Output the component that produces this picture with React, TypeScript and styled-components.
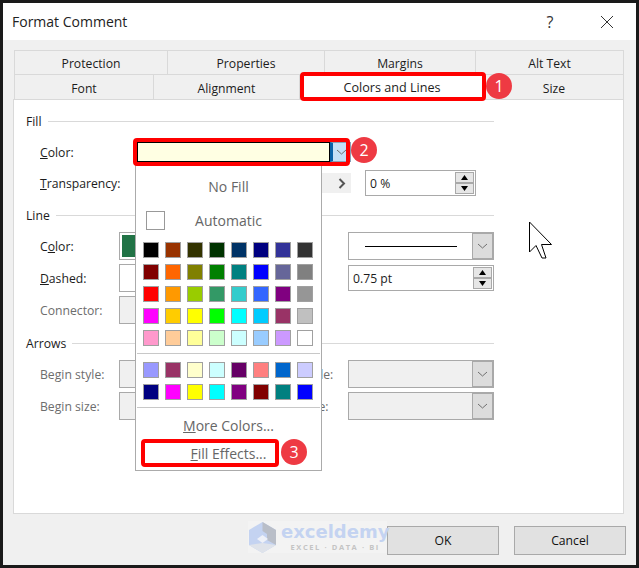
import * as React from "react";
import styled, {createGlobalStyle} from "styled-components";

const GlobalStyle = createGlobalStyle`
  html, body {
    margin: 0;
    padding: 0;
    background: #000;
  }
  body {
    font-family: "Open Sans", "Noto Sans", sans-serif;
    font-size: 12.2px;
    color: #1c1c1c;
  }
`;

const Dialog = styled.div`
  position: relative;
  box-sizing: border-box;
  width: 639px;
  height: 568px;
  border: 3px solid #1a1a1a;
  background: #f0f0f0;
  overflow: hidden;
`;

const TitleBar = styled.header`
  display: flex;
  align-items: center;
  height: 37px;
  padding: 0 22px 0 9px;
  background: #fff;
`;

const Title = styled.h1`
  flex: 1;
  margin: 0;
  font-size: 14px;
  font-weight: 400;
  color: #222;
`;

const TitleButton = styled.span`
  display: flex;
  justify-content: center;
  align-items: center;
  width: 14px;
  margin-left: 43px;
  font-size: 16px;
  color: #333;
`;

const Body = styled.div`
  padding: 10px 0 0 10px;
`;

const TabRow = styled.div`
  display: flex;
  margin-left: 1px;
`;

const Tab = styled.div<{$w: number; $h: number; $active?: boolean}>`
  box-sizing: border-box;
  display: flex;
  justify-content: center;
  align-items: center;
  width: ${p => p.$w}px;
  height: ${p => p.$h}px;
  padding-top: ${p => (p.$active ? 0 : 2)}px;
  border-top: 1px solid #d9d9d9;
  border-right: 1px solid #d9d9d9;
  background: ${p => (p.$active ? "#fff" : "#f0f0f0")};
  font-size: ${p => (p.$active ? 12.6 : 12.2)}px;
`;

const FirstTabBorder = styled.div`
  border-left: 1px solid #d9d9d9;
  display: flex;
`;

const Panel = styled.main`
  box-sizing: border-box;
  width: 611px;
  height: 415px;
  padding: 13px 0 0 12px;
  border: 1px solid #d9d9d9;
  background: #fff;
`;

const Form = styled.div`
  width: 468px;
`;

const Heading = styled.div<{$top?: number}>`
  display: flex;
  align-items: center;
  gap: 6px;
  height: 16px;
  margin-top: ${p => p.$top ?? 0}px;
  &::after {
    content: "";
    flex: 1;
    height: 1px;
    background: #d9d9d9;
  }
`;

const FillRow = styled.div<{$top: number; $h: number}>`
  display: flex;
  align-items: center;
  height: ${p => p.$h}px;
  margin-top: ${p => p.$top}px;
  padding-left: 14px;
`;

const GridRow = styled.div<{$top: number}>`
  display: grid;
  grid-template-columns: 79px 160px 69px 146px;
  align-items: center;
  height: 28px;
  margin-top: ${p => p.$top}px;
  padding-left: 14px;
`;

const Label = styled.label<{$w?: number; $off?: boolean}>`
  ${p => (p.$w ? `width: ${p.$w}px;` : "")}
  color: ${p => (p.$off ? "#6d6d6d" : "#1c1c1c")};
  white-space: nowrap;
`;

const Key = styled.span`
  text-decoration: underline;
`;

const ColorField = styled.div`
  box-sizing: border-box;
  width: 193px;
  height: 20px;
  border: 1px solid #000;
  background: #ffffe3;
`;

const ColorArrow = styled.div`
  box-sizing: border-box;
  display: flex;
  justify-content: center;
  align-items: center;
  width: 21px;
  height: 20px;
  border: 1px solid #8a9fb5;
  border-left: 3px solid #0a62a8;
  background: #c4dff6;
`;

const Slider = styled.div`
  display: flex;
  justify-content: flex-end;
  align-items: center;
  width: 214px;
  height: 20px;
  margin-right: 14px;
  background: #f0f0f0;
`;

const SliderEnd = styled.div`
  display: flex;
  justify-content: center;
  align-items: center;
  width: 18px;
`;

const SpinBox = styled.div<{$w: number; $h: number}>`
  box-sizing: border-box;
  display: flex;
  align-items: center;
  justify-content: space-between;
  width: ${p => p.$w}px;
  height: ${p => p.$h}px;
  padding: 1px 1px 1px 4px;
  border: 1px solid #a9a9a9;
  background: #fff;
`;

const SpinButtons = styled.div`
  display: flex;
  flex-direction: column;
  width: 19px;
  align-self: stretch;
`;

const SpinButton = styled.div`
  flex: 1;
  display: flex;
  justify-content: center;
  align-items: center;
  border: 1px solid #a9a9a9;
  background: #e6e6e6;
`;

const LeftBox = styled.div<{$off?: boolean}>`
  box-sizing: border-box;
  width: 160px;
  height: 28px;
  padding: 2px;
  border: 1px solid #a9a9a9;
  background: ${p => (p.$off ? "#f0f0f0" : "#fff")};
`;

const Swatch = styled.div`
  height: 100%;
  background: #217346;
`;

const Combo = styled.div<{$off?: boolean}>`
  box-sizing: border-box;
  display: flex;
  width: 146px;
  height: 28px;
  border: 1px solid #a9a9a9;
  background: ${p => (p.$off ? "#f0f0f0" : "#fff")};
`;

const ComboValue = styled.div`
  flex: 1;
  display: flex;
  align-items: center;
  justify-content: center;
`;

const LineSample = styled.div`
  width: 92px;
  height: 1px;
  background: #000;
`;

const ComboButton = styled.div`
  box-sizing: border-box;
  display: flex;
  justify-content: center;
  align-items: center;
  width: 21px;
  border: 1px solid #a9a9a9;
  background: #dcdcdc;
`;

const Footer = styled.footer`
  display: flex;
  justify-content: flex-end;
  gap: 15px;
  padding: 12px 10px 0 0;
`;

const Button = styled.button`
  box-sizing: border-box;
  width: 112px;
  height: 29px;
  padding: 0;
  border: 1px solid #a9a9a9;
  background: #e1e1e1;
  color: #111;
  font: inherit;
`;

const Popup = styled.div`
  position: absolute;
  left: 132px;
  top: 162px;
  box-sizing: border-box;
  width: 187px;
  height: 306px;
  border: 1px solid #ababab;
  background: #fff;
  color: #666;
  font-size: 14px;
`;

const PopupRow = styled.div<{$h: number}>`
  display: flex;
  justify-content: center;
  align-items: center;
  height: ${p => p.$h}px;
`;

const AutoRow = styled.div`
  display: grid;
  grid-template-columns: 1fr auto 1fr;
  align-items: center;
  height: 28px;
`;

const AutoBox = styled.div`
  box-sizing: border-box;
  width: 19px;
  height: 19px;
  margin-left: 10px;
  border: 1px solid #999;
`;

const Palette = styled.div<{$top?: number}>`
  display: grid;
  grid-template-columns: repeat(8, 16px);
  gap: 6px;
  padding: 0 7px;
  margin-top: ${p => p.$top ?? 0}px;
`;

const Chip = styled.div<{$c: string}>`
  box-sizing: border-box;
  width: 16px;
  height: 16px;
  border: 1px solid #a0a0a0;
  background: ${p => p.$c};
`;

const Divider = styled.div<{$bottom: number}>`
  height: 1px;
  margin: 7px 1px ${p => p.$bottom}px;
  background: #c8c8c8;
`;

const Highlight = styled.div<{$x: number; $y: number; $w: number; $h: number}>`
  position: absolute;
  left: ${p => p.$x}px;
  top: ${p => p.$y}px;
  box-sizing: border-box;
  width: ${p => p.$w}px;
  height: ${p => p.$h}px;
  border: 4px solid #f00;
  border-radius: 4px;
`;

const Badge = styled.div<{$x: number; $y: number}>`
  position: absolute;
  left: ${p => p.$x}px;
  top: ${p => p.$y}px;
  display: flex;
  justify-content: center;
  align-items: center;
  width: 26px;
  height: 26px;
  border-radius: 50%;
  background: #ee3a43;
  color: #fff;
  font-size: 16px;
`;

const Cursor = styled.svg`
  position: absolute;
  left: 525px;
  top: 218px;
`;

const Watermark = styled.div`
  position: absolute;
  left: 245px;
  top: 518px;
  display: flex;
  gap: 4px;
  width: 139px;
  height: 32px;
  background: #f3f3f3;
`;

const MarkLogo = styled.svg`
  flex-shrink: 0;
`;

const MarkText = styled.div`
  display: flex;
  flex-direction: column;
  align-items: center;
`;

const MarkName = styled.div`
  font-family: "DejaVu Sans", sans-serif;
  font-size: 18px;
  font-weight: 700;
  line-height: 21px;
  color: #c4d3f1;
`;

const MarkSub = styled.div`
  font-size: 7.5px;
  font-weight: 700;
  letter-spacing: 1.6px;
  line-height: 10px;
  color: #c4c4c4;
  white-space: nowrap;
`;

const Chevron = () => (
  <svg width="11" height="6" viewBox="0 0 11 6">
    <path d="M1 1 L5.5 5 L10 1" fill="none" stroke="#6f6f6f" strokeWidth="1" />
  </svg>
);

const Triangle = ({down}: {down?: boolean}) => (
  <svg width="9" height="5" viewBox="0 0 9 5">
    <path d={down ? "M1 0 H8 L4.5 5 Z" : "M4.5 0 L8 5 H1 Z"} fill="#000" />
  </svg>
);

const Spin = () => (
  <SpinButtons>
    <SpinButton><Triangle /></SpinButton>
    <SpinButton><Triangle down /></SpinButton>
  </SpinButtons>
);

const themeColors = [
  "#000000", "#993300", "#333300", "#003300", "#003366", "#000080", "#333399", "#333333",
  "#800000", "#ff6600", "#808000", "#008000", "#008080", "#0000ff", "#666699", "#808080",
  "#ff0000", "#ff9900", "#99cc00", "#339966", "#33cccc", "#3366ff", "#800080", "#969696",
  "#ff00ff", "#ffcc00", "#ffff00", "#00ff00", "#00ffff", "#00ccff", "#993366", "#c0c0c0",
  "#ff99cc", "#ffcc99", "#ffff99", "#ccffcc", "#ccffff", "#99ccff", "#cc99ff", "#ffffff",
];

const extraColors = [
  "#9999ff", "#993366", "#ffffcc", "#ccffff", "#660066", "#ff8080", "#0066cc", "#ccccff",
  "#000080", "#ff00ff", "#ffff00", "#00ffff", "#800080", "#800000", "#008080", "#0000ff",
];

export default function App() {
  return (
    <>
      <GlobalStyle />
      <Dialog>
        <TitleBar>
          <Title>Format Comment</Title>
          <TitleButton>?</TitleButton>
          <TitleButton>
            <svg width="14" height="14" viewBox="0 0 14 14">
              <path d="M1 1 L13 13 M13 1 L1 13" stroke="#333" strokeWidth="1" fill="none" />
            </svg>
          </TitleButton>
        </TitleBar>
        <Body>
          <TabRow>
            <FirstTabBorder>
              <Tab $w={153} $h={24}>Protection</Tab>
              <Tab $w={157} $h={24}>Properties</Tab>
              <Tab $w={151} $h={24}>Margins</Tab>
              <Tab $w={148} $h={24}>Alt Text</Tab>
            </FirstTabBorder>
          </TabRow>
          <TabRow>
            <FirstTabBorder>
              <Tab $w={139} $h={25}>Font</Tab>
              <Tab $w={146} $h={25}>Alignment</Tab>
              <Tab $w={185} $h={25} $active>Colors and Lines</Tab>
              <Tab $w={139} $h={25}>Size</Tab>
            </FirstTabBorder>
          </TabRow>
          <Panel>
            <Form>
              <Heading>Fill</Heading>
              <FillRow $top={13} $h={20}>
                <Label $w={97}><Key>C</Key>olor:</Label>
                <ColorField />
                <ColorArrow><Chevron /></ColorArrow>
              </FillRow>
              <FillRow $top={8} $h={26}>
                <Label $w={97}><Key>T</Key>ransparency:</Label>
                <Slider>
                  <SliderEnd>
                    <svg width="8" height="11" viewBox="0 0 8 11">
                      <path d="M1.5 1 L6 5.5 L1.5 10" fill="none" stroke="#555" strokeWidth="2" />
                    </svg>
                  </SliderEnd>
                </Slider>
                <SpinBox $w={111} $h={26}>
                  0 %
                  <Spin />
                </SpinBox>
              </FillRow>

              <Heading $top={11}>Line</Heading>
              <GridRow $top={9}>
                <Label>C<Key>o</Key>lor:</Label>
                <LeftBox><Swatch /></LeftBox>
                <Label>Style:</Label>
                <Combo>
                  <ComboValue><LineSample /></ComboValue>
                  <ComboButton><Chevron /></ComboButton>
                </Combo>
              </GridRow>
              <GridRow $top={4}>
                <Label><Key>D</Key>ashed:</Label>
                <LeftBox />
                <Label>Weight:</Label>
                <SpinBox $w={146} $h={26}>
                  0.75 pt
                  <Spin />
                </SpinBox>
              </GridRow>
              <GridRow $top={4}>
                <Label $off>Connector:</Label>
                <LeftBox $off />
              </GridRow>

              <Heading $top={11}>Arrows</Heading>
              <GridRow $top={9}>
                <Label $off>Begin style:</Label>
                <LeftBox $off />
                <Label $off>End style:</Label>
                <Combo $off>
                  <ComboValue />
                  <ComboButton><Chevron /></ComboButton>
                </Combo>
              </GridRow>
              <GridRow $top={4}>
                <Label $off>Begin size:</Label>
                <LeftBox $off />
                <Label $off>End size:</Label>
                <Combo $off>
                  <ComboValue />
                  <ComboButton><Chevron /></ComboButton>
                </Combo>
              </GridRow>
            </Form>
          </Panel>
          <Footer>
            <Button>OK</Button>
            <Button>Cancel</Button>
          </Footer>
        </Body>

        <Watermark>
          <MarkLogo width="29" height="32" viewBox="0 0 29 32">
            <path d="M14.5 1 L28 9 V24 L14.5 32 L1 24 V9 Z" fill="#c4d3f1" />
            <path d="M14.5 1 L28 9 V24 L19 19 V13 L14.5 10 Z" fill="#b9bec8" />
            <path d="M14.5 14 L20 18 L14.5 22 L9 18 Z" fill="#eef1f8" />
            <path d="M1 24 L14.5 22 L28 24 L14.5 32 Z" fill="#dfe3ea" />
          </MarkLogo>
          <MarkText>
            <MarkName>exceldemy</MarkName>
            <MarkSub>EXCEL · DATA · BI</MarkSub>
          </MarkText>
        </Watermark>

        <Popup>
          <PopupRow $h={40}>No Fill</PopupRow>
          <AutoRow>
            <AutoBox />
            <span>Automatic</span>
          </AutoRow>
          <Palette $top={8}>
            {themeColors.map((c, i) => <Chip key={i} $c={c} />)}
          </Palette>
          <Divider $bottom={8} />
          <Palette>
            {extraColors.map((c, i) => <Chip key={i} $c={c} />)}
          </Palette>
          <Divider $bottom={3} />
          <PopupRow $h={28}><span><Key>M</Key>ore Colors...</span></PopupRow>
          <PopupRow $h={28}><span><Key>F</Key>ill Effects...</span></PopupRow>
        </Popup>

        <Highlight $x={297} $y={69} $w={186} $h={29} />
        <Highlight $x={130} $y={135} $w={217} $h={28} />
        <Highlight $x={138} $y={436} $w={138} $h={28} />
        <Badge $x={483} $y={70}>1</Badge>
        <Badge $x={348} $y={134}>2</Badge>
        <Badge $x={278} $y={436}>3</Badge>

        <Cursor width="30" height="42" viewBox="0 0 30 42">
          <path
            d="M1.5 1 V31 L8 24.5 L14 37 H18 L13.5 23.5 H23.5 Z"
            fill="#fff"
            stroke="#000"
            strokeWidth="1"
          />
        </Cursor>
      </Dialog>
    </>
  );
}
